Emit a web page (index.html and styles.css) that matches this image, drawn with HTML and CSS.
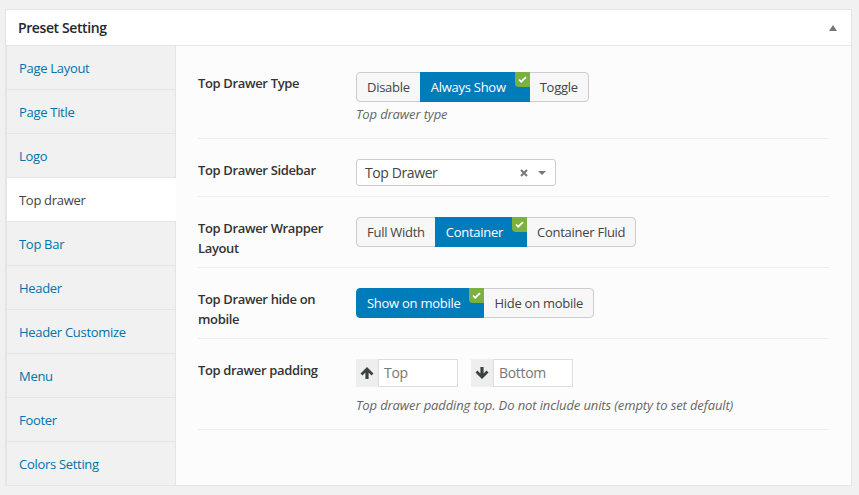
FILE: index.html
```html
<!DOCTYPE html>
<html lang="en">
<head>
    <meta charset="UTF-8">
    <title>Preset Setting</title>
    <link rel="stylesheet" href="styles.css">
</head>
<body>
    <div class="postbox">
        <div class="postbox-header">
            <h2>Preset Setting</h2>
            <span class="toggle-arrow"></span>
        </div>
        <div class="postbox-inside">
            <ul class="tabs">
                <li><a href="#">Page Layout</a></li>
                <li><a href="#">Page Title</a></li>
                <li><a href="#">Logo</a></li>
                <li class="active"><a href="#">Top drawer</a></li>
                <li><a href="#">Top Bar</a></li>
                <li><a href="#">Header</a></li>
                <li><a href="#">Header Customize</a></li>
                <li><a href="#">Menu</a></li>
                <li><a href="#">Footer</a></li>
                <li><a href="#">Colors Setting</a></li>
            </ul>
            <div class="fields">
                <div class="field field-type">
                    <label class="field-label">Top Drawer Type</label>
                    <div class="field-input">
                        <div class="btn-group">
                            <span class="btn">Disable</span>
                            <span class="btn selected">Always Show<span class="check"><svg viewBox="0 0 10 8" width="9" height="7"><path d="M1 4l2.5 2.5L9 1.2" fill="none" stroke="#fff" stroke-width="2"/></svg></span></span>
                            <span class="btn">Toggle</span>
                        </div>
                        <p class="desc">Top drawer type</p>
                    </div>
                </div>
                <div class="field field-sidebar">
                    <label class="field-label">Top Drawer Sidebar</label>
                    <div class="field-input">
                        <div class="select">
                            <span class="select-value">Top Drawer</span>
                            <svg class="select-clear" viewBox="0 0 8 8" width="8" height="8"><path d="M1 1l6 6M7 1L1 7" fill="none" stroke="#777" stroke-width="2"/></svg>
                            <span class="select-arrow"></span>
                        </div>
                    </div>
                </div>
                <div class="field field-wrap">
                    <label class="field-label">Top Drawer Wrapper Layout</label>
                    <div class="field-input">
                        <div class="btn-group">
                            <span class="btn">Full Width</span>
                            <span class="btn selected">Container<span class="check"><svg viewBox="0 0 10 8" width="9" height="7"><path d="M1 4l2.5 2.5L9 1.2" fill="none" stroke="#fff" stroke-width="2"/></svg></span></span>
                            <span class="btn">Container Fluid</span>
                        </div>
                    </div>
                </div>
                <div class="field field-wrap">
                    <label class="field-label">Top Drawer hide on mobile</label>
                    <div class="field-input">
                        <div class="btn-group">
                            <span class="btn selected">Show on mobile<span class="check"><svg viewBox="0 0 10 8" width="9" height="7"><path d="M1 4l2.5 2.5L9 1.2" fill="none" stroke="#fff" stroke-width="2"/></svg></span></span>
                            <span class="btn">Hide on mobile</span>
                        </div>
                    </div>
                </div>
                <div class="field field-padding">
                    <label class="field-label">Top drawer padding</label>
                    <div class="field-input">
                        <div class="padding-inputs">
                            <div class="padding-input">
                                <span class="addon"><svg viewBox="0 0 14 14" width="14" height="14"><path d="M7 1L13.5 7.4 11.5 9.4 8.6 6.5V13H5.4V6.5L2.5 9.4 .5 7.4Z" fill="#3c4144"/></svg></span>
                                <span class="text-input">Top</span>
                            </div>
                            <div class="padding-input">
                                <span class="addon"><svg viewBox="0 0 14 14" width="14" height="14"><path d="M7 13L13.5 6.6 11.5 4.6 8.6 7.5V1H5.4V7.5L2.5 4.6 .5 6.6Z" fill="#3c4144"/></svg></span>
                                <span class="text-input">Bottom</span>
                            </div>
                        </div>
                        <p class="desc">Top drawer padding top. Do not include units (empty to set default)</p>
                    </div>
                </div>
            </div>
        </div>
    </div>
</body>
</html>
```

FILE: styles.css
```css
* {
    box-sizing: border-box;
    margin: 0;
    padding: 0;
}

body {
    background: #f1f1f1;
    color: #444;
    font-family: "Open Sans", sans-serif;
    font-size: 13px;
    line-height: 20px;
    padding: 9px 7px 0 5px;
    overflow: hidden;
}

.postbox {
    height: 477px;
    background: #fff;
    border: 1px solid #e5e5e5;
    box-shadow: 0 1px 1px rgba(0,0,0,0.04);
}

.postbox-header {
    height: 36px;
    display: flex;
    align-items: center;
    justify-content: space-between;
    padding: 0 14px 0 12px;
    border-bottom: 1px solid #e5e5e5;
}

.postbox-header h2 {
    font-size: 14px;
    font-weight: 600;
    letter-spacing: -0.4px;
    color: #23282d;
}

.toggle-arrow {
    border-left: 4px solid transparent;
    border-right: 4px solid transparent;
    border-bottom: 6px solid #72777c;
}

.postbox-inside {
    display: flex;
    height: 439px;
}

.tabs {
    width: 170px;
    flex-shrink: 0;
    background: #f1f1f1;
    border-left: 1px solid #e5e5e5;
    border-right: 1px solid #e5e5e5;
    list-style: none;
}

.tabs li {
    height: 44px;
    padding: 0 12px;
    display: flex;
    align-items: center;
    border-bottom: 1px solid #e5e5e5;
    letter-spacing: -0.3px;
}

.tabs li.active {
    background: #fff;
    margin-right: -1px;
    position: relative;
}

.tabs a {
    color: #0073aa;
    text-decoration: none;
}

.tabs .active a {
    color: #444;
}

.fields {
    flex: 1;
    background: #fcfcfc;
    padding: 15px 22px 0;
}

.field {
    display: flex;
    border-bottom: 1px solid #eee;
}

.field-type {
    height: 78px;
    padding-top: 11px;
}

.field-sidebar {
    height: 58px;
    padding-top: 20px;
}

.field-wrap {
    height: 71px;
    padding-top: 20px;
}

.field-padding {
    height: 91px;
    padding-top: 20px;
}

.field-label {
    width: 158px;
    flex-shrink: 0;
    font-weight: 600;
    letter-spacing: -0.35px;
    color: #333;
    padding-top: 1px;
    padding-right: 10px;
}

.btn-group {
    display: inline-flex;
    height: 30px;
    letter-spacing: -0.27px;
}

.btn {
    position: relative;
    height: 30px;
    padding: 0 10px;
    display: flex;
    align-items: center;
    color: #444;
    background: #f7f7f7;
    border: 1px solid #ccc;
    margin-left: -1px;
}

.btn:first-child {
    margin-left: 0;
    border-radius: 4px 0 0 4px;
}

.btn:last-child {
    border-radius: 0 4px 4px 0;
}

.btn.selected {
    background: #007cba;
    border-color: #007cba;
    color: #fff;
    padding-right: 23px;
    z-index: 1;
}

.check {
    position: absolute;
    top: -1px;
    right: -1px;
    width: 15px;
    height: 15px;
    background: #7cb13f;
    border-radius: 0 0 0 4px;
    display: flex;
    align-items: center;
    justify-content: center;
}

.desc {
    font-style: italic;
    color: #666;
    letter-spacing: -0.12px;
    margin-top: 2px;
}

.select {
    width: 200px;
    height: 27px;
    background: #fff;
    border: 1px solid #ccc;
    border-radius: 3px;
    display: flex;
    align-items: center;
    padding: 0 9px 0 8px;
}

.select-value {
    flex: 1;
    font-size: 14px;
    letter-spacing: -0.4px;
}

.select-clear {
    margin-right: 10px;
}

.select-arrow {
    border-left: 4px solid transparent;
    border-right: 4px solid transparent;
    border-top: 4px solid #777;
}

.padding-inputs {
    display: flex;
    gap: 13px;
}

.padding-input {
    display: flex;
    height: 28px;
}

.addon {
    width: 22px;
    background: #eee;
    display: flex;
    align-items: center;
    justify-content: center;
}

.text-input {
    width: 80px;
    height: 28px;
    background: #fff;
    border: 1px solid #ddd;
    color: #777;
    font-size: 14px;
    letter-spacing: -0.3px;
    padding: 0 5px;
    display: flex;
    align-items: center;
}

.padding-inputs + .desc {
    margin-top: 8px;
}
```
